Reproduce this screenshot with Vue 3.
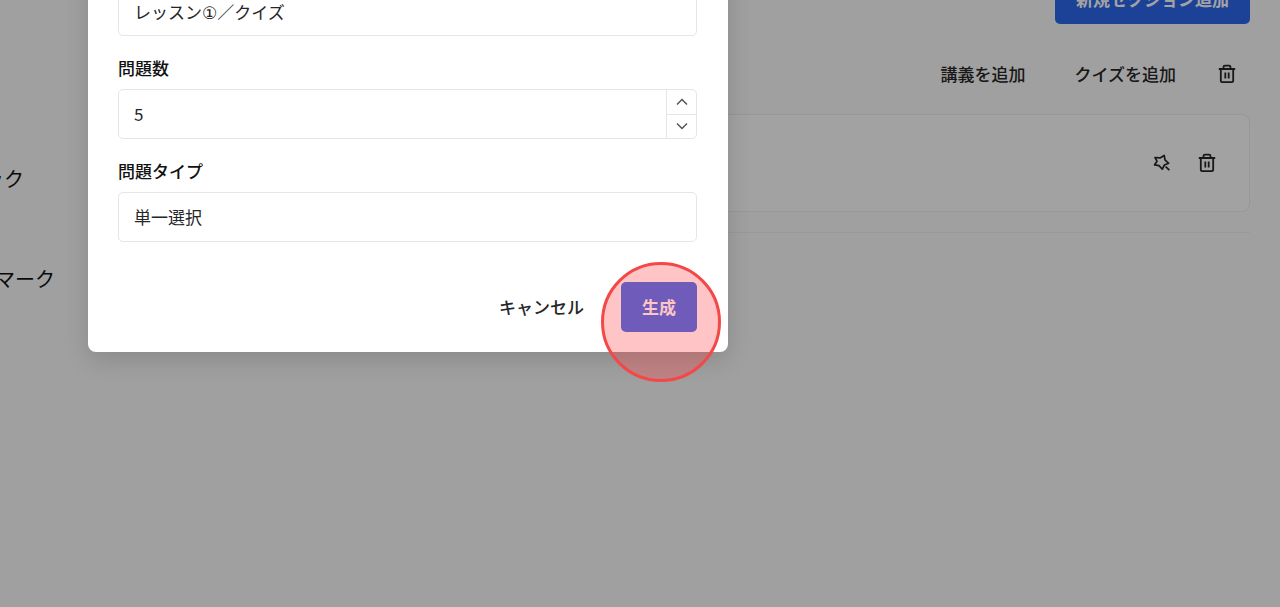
<script setup>
import { ref } from 'vue'

const lessonTitle = ref('レッスン①／クイズ')
const questionCount = ref(5)
const questionType = ref('単一選択')
const sidebarItems = [
  { label: 'ック', indent: -16 },
  { label: 'マーク', indent: -5 },
]
const step = (n) => {
  questionCount.value = Math.max(1, Number(questionCount.value) + n)
}
</script>

<template>
  <div class="page">
    <nav class="sidebar" aria-label="メニュー">
      <a
        v-for="item in sidebarItems"
        :key="item.label"
        href="#"
        :style="{ marginLeft: item.indent + 'px' }"
      >{{ item.label }}</a>
    </nav>

    <main class="content">
      <button type="button" class="primary new-section">新規セクション追加</button>
      <section class="section">
        <header class="section-bar">
          <button type="button" class="plain">講義を追加</button>
          <button type="button" class="plain">クイズを追加</button>
          <button type="button" class="icon" aria-label="セクションを削除">
            <svg width="20" height="20" viewBox="0 0 20 20" fill="none" stroke="currentColor" stroke-width="1.8" stroke-linejoin="round">
              <path d="M1.8 5H18.2M6.5 5V3Q6.5 1.6 8 1.6H12Q13.5 1.6 13.5 3V5M3.8 5V16.6Q3.8 18.2 5.4 18.2H14.6Q16.2 18.2 16.2 16.6V5M8.3 8.4V14.6M11.7 8.4V14.6" />
            </svg>
          </button>
        </header>
        <div class="card">
          <button type="button" class="icon" aria-label="AIで生成">
            <svg width="18" height="18" viewBox="0 0 18 18" fill="none" stroke="currentColor" stroke-width="1.7" stroke-linejoin="round">
              <path d="M2 3.5L7 3.9L11.2 1.4L12 5.8L15.6 9.3L11.4 11L9.3 15.2L6 11.6L1.6 10.8L4 7.2Z" />
              <path d="M12.6 12.6L16.4 16.2" />
            </svg>
          </button>
          <button type="button" class="icon" aria-label="クイズを削除">
            <svg width="20" height="20" viewBox="0 0 20 20" fill="none" stroke="currentColor" stroke-width="1.8" stroke-linejoin="round">
              <path d="M1.8 5H18.2M6.5 5V3Q6.5 1.6 8 1.6H12Q13.5 1.6 13.5 3V5M3.8 5V16.6Q3.8 18.2 5.4 18.2H14.6Q16.2 18.2 16.2 16.6V5M8.3 8.4V14.6M11.7 8.4V14.6" />
            </svg>
          </button>
        </div>
      </section>
    </main>

    <div class="overlay">
      <form class="dialog" role="dialog" aria-label="クイズ生成" @submit.prevent>
        <input v-model="lessonTitle" class="box title" type="text" aria-label="タイトル">

        <label for="count">問題数</label>
        <div class="box number">
          <input id="count" v-model="questionCount" type="text" inputmode="numeric">
          <div class="steps">
            <button type="button" aria-label="増やす" @click="step(1)">
              <svg width="12" height="8" viewBox="0 0 12 8" fill="none" stroke="currentColor" stroke-width="1.5"><path d="M1 6.5L6 1.5L11 6.5" /></svg>
            </button>
            <button type="button" aria-label="減らす" @click="step(-1)">
              <svg width="12" height="8" viewBox="0 0 12 8" fill="none" stroke="currentColor" stroke-width="1.5"><path d="M1 1.5L6 6.5L11 1.5" /></svg>
            </button>
          </div>
        </div>

        <label for="type">問題タイプ</label>
        <select id="type" v-model="questionType" class="box">
          <option>単一選択</option>
        </select>

        <div class="actions">
          <button type="button" class="plain">キャンセル</button>
          <div class="target">
            <button type="submit" class="primary">生成</button>
            <span class="marker" />
          </div>
        </div>
      </form>
    </div>
  </div>
</template>

<style>
body {
  background: #fafafa;
}
</style>

<style scoped>
.page {
  position: relative;
  display: flex;
  min-height: 100vh;
  overflow: hidden;
  background: #fafafa;
  color: #262628;
  font: 17px/24px "Noto Sans CJK JP", sans-serif;
}
.page * {
  box-sizing: border-box;
}
button,
input,
select {
  margin: 0;
  padding: 0;
  border: 0;
  background: none;
  color: inherit;
  font: inherit;
}
button {
  cursor: pointer;
}
svg {
  display: block;
}
.sidebar {
  flex: 0 0 240px;
  display: flex;
  flex-direction: column;
  gap: 72px;
  padding-top: 165px;
}
.sidebar a {
  color: #111;
  font-size: 20px;
  line-height: 28px;
  text-decoration: none;
  white-space: nowrap;
}
.content {
  flex: 1;
  display: flex;
  flex-direction: column;
  margin-top: -26px;
  padding-right: 30px;
}
.primary {
  height: 50px;
  padding: 0 20px;
  border-radius: 5px;
  background: #2d68ee;
  color: #fff;
  font-weight: 700;
}
.new-section {
  align-self: flex-end;
  min-width: 195px;
}
.section {
  padding-bottom: 20px;
  border-bottom: 1px solid #f0f0f0;
}
.section-bar {
  display: flex;
  align-items: center;
  justify-content: flex-end;
  gap: 49px;
  height: 60px;
  margin-top: 20px;
  padding-right: 13px;
}
.section-bar .icon {
  margin-left: -8px;
}
.plain {
  font-weight: 500;
}
.card {
  display: flex;
  align-items: center;
  justify-content: flex-end;
  gap: 26px;
  height: 98px;
  margin-top: 10px;
  padding-right: 32px;
  border: 1px solid #ececec;
  border-radius: 8px;
  background: #fefefe;
}
.overlay {
  position: absolute;
  inset: 0;
  padding-left: 88px;
  background: rgba(0, 0, 0, 0.36);
}
.dialog {
  display: flex;
  flex-direction: column;
  width: 640px;
  margin-top: -44px;
  padding: 30px 31px 20px 30px;
  border-radius: 8px;
  background: #fff;
  box-shadow: 0 8px 24px rgba(0, 0, 0, 0.14);
}
.box {
  width: 100%;
  height: 50px;
  padding: 0 15px;
  border: 1px solid #e6e6e8;
  border-radius: 5px;
  background: #fff;
}
.title {
  font-family: "DejaVu Sans", "Noto Sans CJK JP", sans-serif;
}
select.box {
  appearance: none;
}
label {
  margin: 20px 0 9px;
  color: #111;
  font-weight: 500;
}
.number {
  display: flex;
  padding-right: 0;
}
.number input {
  flex: 1;
  min-width: 0;
}
.steps {
  display: flex;
  flex-direction: column;
  width: 30px;
  border-left: 1px solid #e6e6e8;
  color: #555;
}
.steps button {
  flex: 1;
  display: grid;
  place-items: center;
}
.steps button + button {
  border-top: 1px solid #e6e6e8;
}
.actions {
  display: flex;
  align-items: center;
  justify-content: flex-end;
  gap: 37px;
  margin-top: 40px;
}
.target {
  position: relative;
}
.target .primary {
  min-width: 76px;
}
.marker {
  position: absolute;
  top: -20px;
  left: -20px;
  width: 120px;
  height: 120px;
  border: 3px solid #f44848;
  border-radius: 50%;
  background: rgba(255, 66, 72, 0.31);
  pointer-events: none;
}
</style>
